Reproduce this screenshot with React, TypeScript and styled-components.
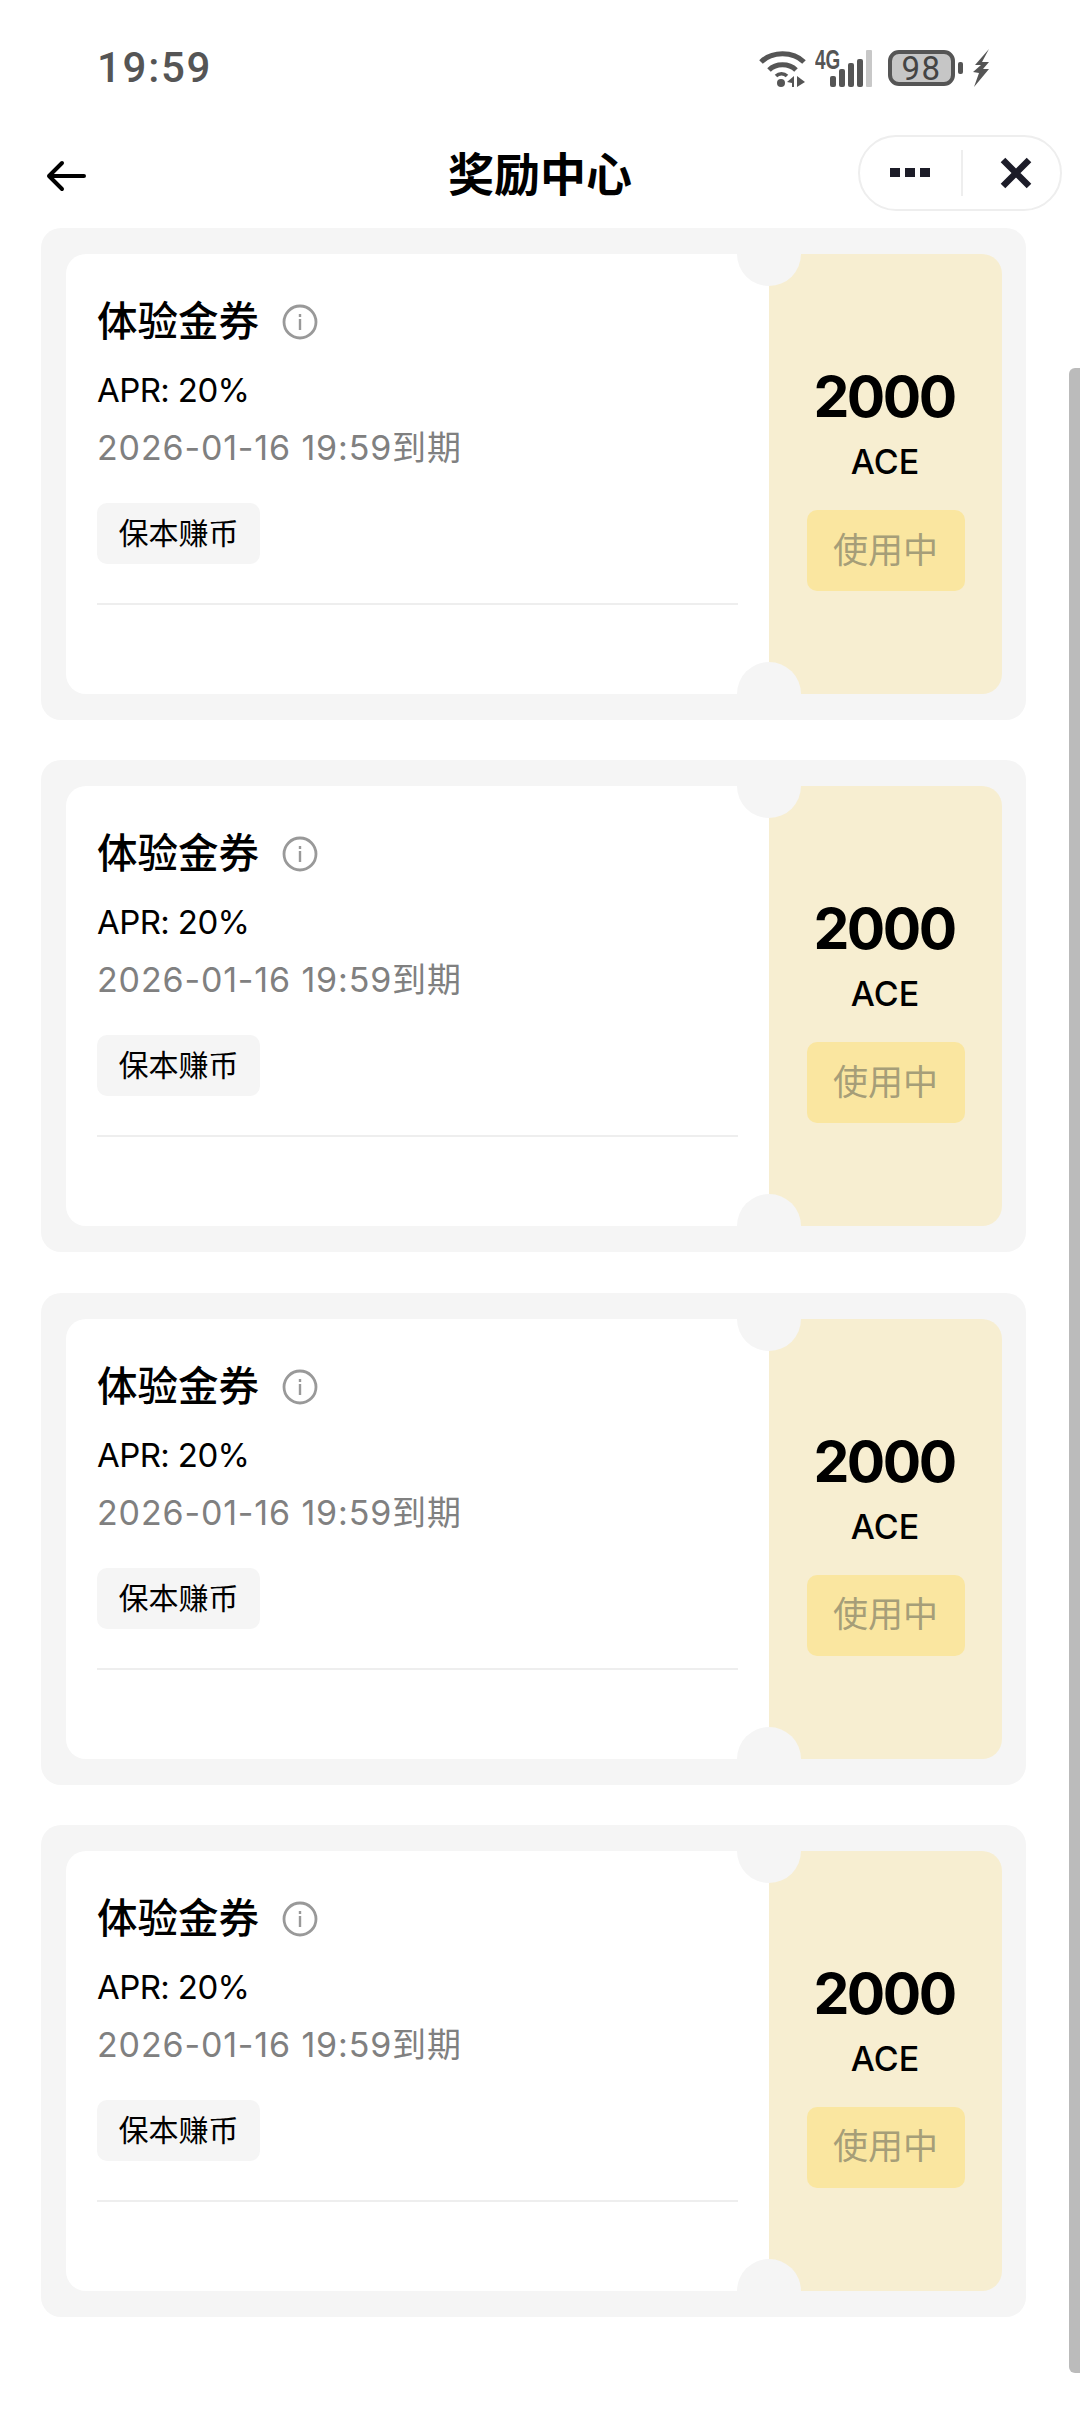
import React from "react";
import styled, { createGlobalStyle } from "styled-components";

const FONT = `Inter, "Noto Sans CJK SC", sans-serif`;

const GlobalStyle = createGlobalStyle`
  html, body {
    margin: 0;
    padding: 0;
    background: #fff;
  }
  * {
    box-sizing: border-box;
  }
`;

const Page = styled.div`
  position: relative;
  width: 1080px;
  height: 2412px;
  overflow: hidden;
  background: #fff;
  font-family: ${FONT};
  color: #000;
`;

const StatusBar = styled.div`
  height: 135px;
  padding: 44px 91px 0 97px;
  display: flex;
  justify-content: space-between;
  align-items: flex-start;
`;

const Clock = styled.span`
  font-family: Roboto, sans-serif;
  font-size: 42px;
  line-height: 48px;
  font-weight: 500;
  letter-spacing: 1.7px;
  color: #555;
`;

const StatusIcons = styled.div`
  display: flex;
  align-items: center;
  gap: 10px;
  height: 48px;
`;

const Signal = styled.div`
  position: relative;
  width: 56px;
  height: 37px;
`;

const SignalLabel = styled.span`
  position: absolute;
  left: -1px;
  top: -3px;
  font-family: "Liberation Sans", sans-serif;
  font-size: 27px;
  line-height: 27px;
  font-weight: 700;
  color: #555;
  transform: scaleX(0.7);
  transform-origin: left top;
`;

const Battery = styled.div`
  width: 67px;
  height: 36px;
  margin-left: 6px;
  border: 4px solid #555;
  border-radius: 11px;
  background: #c6c6c6;
  display: flex;
  align-items: center;
  justify-content: center;
  font-family: Roboto, sans-serif;
  font-size: 33px;
  letter-spacing: 1.5px;
  color: #444;
`;

const BatteryNub = styled.div`
  width: 5px;
  height: 12px;
  margin-left: -7px;
  border-radius: 2px;
  background: #555;
`;

const NavBar = styled.div`
  position: relative;
  height: 76px;
  display: flex;
  align-items: center;
  justify-content: space-between;
  padding: 0 18px 0 46px;
`;

const NavTitle = styled.h1`
  position: absolute;
  left: 0;
  right: 0;
  top: 7px;
  margin: 0;
  text-align: center;
  font-size: 46px;
  line-height: 64px;
  font-weight: 700;
  pointer-events: none;
`;

const BackSvg = styled.svg`
  margin-top: 6px;
`;

const Capsule = styled.div`
  width: 204px;
  height: 76px;
  border: 2px solid #eeeeee;
  border-radius: 38px;
  display: flex;
  align-items: center;
  padding-left: 30px;
`;

const CapsuleDivider = styled.div`
  width: 2px;
  height: 46px;
  margin-left: 31px;
  margin-right: 37px;
  background: #eeeeee;
`;

const List = styled.div`
  display: flex;
  flex-direction: column;
  gap: 40.33px;
  padding: 17px 0 0 41px;
`;

const Card = styled.div`
  width: 985px;
  height: 492px;
  padding: 26px 24px 26px 25px;
  display: flex;
  background: #f5f5f5;
  border-radius: 20px;
`;

const Ticket = styled.div`
  position: relative;
  flex: 1;
  display: flex;
  overflow: hidden;
  border-radius: 20px;
`;

const Notch = styled.span<{ $edge: "top" | "bottom" }>`
  position: absolute;
  left: 671px;
  ${(p) => p.$edge}: -32px;
  width: 64px;
  height: 64px;
  border-radius: 50%;
  background: #f5f5f5;
`;

const Details = styled.div`
  width: 703px;
  padding: 38px 31px 0 31px;
  display: flex;
  flex-direction: column;
  align-items: flex-start;
  background: #fff;
`;

const TitleRow = styled.div`
  display: flex;
  align-items: center;
  gap: 23px;
  height: 60px;
`;

const Title = styled.span`
  font-size: 40.5px;
  line-height: 60px;
  font-weight: 500;
`;

const Apr = styled.div`
  margin-top: 13px;
  font-size: 33px;
  line-height: 50px;
  letter-spacing: -0.6px;
`;

const Expiry = styled.div`
  margin-top: 8px;
  font-size: 34px;
  line-height: 50px;
  letter-spacing: 0.85px;
  color: #808080;
`;

const Tag = styled.div`
  margin-top: 30px;
  width: 163px;
  height: 61px;
  padding-bottom: 5px;
  display: flex;
  align-items: center;
  justify-content: center;
  border-radius: 10px;
  background: #f5f5f5;
  font-size: 30px;
`;

const Divider = styled.div`
  width: 100%;
  height: 2px;
  margin-top: 39px;
  background: #eeeeee;
`;

const Reward = styled.div`
  flex: 1;
  padding-top: 107px;
  display: flex;
  flex-direction: column;
  align-items: center;
  background: #f7eed1;
`;

const Amount = styled.div`
  margin-right: 3px;
  font-size: 57px;
  line-height: 72px;
  font-weight: 700;
  letter-spacing: -2.5px;
`;

const Unit = styled.div`
  margin-top: 7px;
  margin-right: 1px;
  font-size: 34px;
  line-height: 44px;
  font-weight: 500;
`;

const InUse = styled.div`
  margin-top: 26px;
  width: 158px;
  height: 81px;
  padding-bottom: 7px;
  display: flex;
  align-items: center;
  justify-content: center;
  border-radius: 10px;
  background: #fae6a0;
  color: #a69e78;
  font-size: 35px;
`;

const ScrollThumb = styled.div`
  position: absolute;
  left: 1069px;
  top: 368px;
  width: 11px;
  height: 2005px;
  border-radius: 6px 0 0 6px;
  background: #bbbbbb;
`;

const WifiIcon = () => (
  <svg width="47" height="37" viewBox="0 0 47 37" fill="none">
    <path d="M2 12C13 1 34 1 45 12" stroke="#555" strokeWidth="5" />
    <path d="M10 20C17 13 30 13 37 20" stroke="#555" strokeWidth="5" />
    <path d="M17 26C20 23 25 23 28 26" stroke="#555" strokeWidth="3.5" />
    <circle cx="22" cy="33" r="4" fill="#555" />
    <path d="M35 26V37H33V33L28 32ZM38 26L46 32L38 37Z" fill="#555" />
  </svg>
);

const SignalBars = () => (
  <svg width="56" height="37" viewBox="0 0 56 37">
    <rect x="14" y="26" width="6" height="11" rx="2" fill="#555" />
    <rect x="23" y="19" width="6" height="18" rx="2" fill="#555" />
    <rect x="32" y="13" width="6" height="24" rx="2" fill="#555" />
    <rect x="41" y="9" width="6" height="28" rx="2" fill="#555" />
    <rect x="50" y="0" width="6" height="37" rx="1" fill="#c8c8c8" />
  </svg>
);

const BoltIcon = () => (
  <svg width="16" height="38" viewBox="0 0 16 38">
    <path d="M16 0L2 16L8 16L0 23L6 24L1 38L16 20L10 20L16 13L9 13Z" fill="#555" />
  </svg>
);

const BackIcon = () => (
  <BackSvg width="40" height="32" viewBox="0 0 40 32" fill="none">
    <path
      d="M38 16H3M16 3L3 16L16 29"
      stroke="#000"
      strokeWidth="4"
      strokeLinecap="round"
      strokeLinejoin="round"
    />
  </BackSvg>
);

const MoreIcon = () => (
  <svg width="40" height="10" viewBox="0 0 40 10">
    <rect x="0" y="0" width="10" height="9" fill="#1c1c28" />
    <rect x="15" y="0" width="10" height="9" fill="#1c1c28" />
    <rect x="30" y="0" width="10" height="9" fill="#1c1c28" />
  </svg>
);

const CloseIcon = () => (
  <svg width="32" height="32" viewBox="0 0 32 32" fill="none">
    <path d="M3 3L29 29M29 3L3 29" stroke="#1c1c28" strokeWidth="6.5" />
  </svg>
);

const InfoIcon = () => (
  <svg width="36" height="36" viewBox="0 0 36 36" fill="none">
    <circle cx="18" cy="18" r="16" stroke="#999" strokeWidth="2.8" />
    <rect x="16.8" y="15" width="2.4" height="11" fill="#999" />
    <rect x="16.8" y="10" width="2.4" height="3" fill="#999" />
  </svg>
);

const Voucher = () => (
  <Card>
    <Ticket>
      <Details>
        <TitleRow>
          <Title>体验金券</Title>
          <InfoIcon />
        </TitleRow>
        <Apr>APR: 20%</Apr>
        <Expiry>2026-01-16 19:59到期</Expiry>
        <Tag>保本赚币</Tag>
        <Divider />
      </Details>
      <Reward>
        <Amount>2000</Amount>
        <Unit>ACE</Unit>
        <InUse>使用中</InUse>
      </Reward>
      <Notch $edge="top" />
      <Notch $edge="bottom" />
    </Ticket>
  </Card>
);

export default function App() {
  return (
    <Page>
      <GlobalStyle />
      <StatusBar>
        <Clock>19:59</Clock>
        <StatusIcons>
          <WifiIcon />
          <Signal>
            <SignalLabel>4G</SignalLabel>
            <SignalBars />
          </Signal>
          <Battery>98</Battery>
          <BatteryNub />
          <BoltIcon />
        </StatusIcons>
      </StatusBar>
      <NavBar>
        <BackIcon />
        <NavTitle>奖励中心</NavTitle>
        <Capsule>
          <MoreIcon />
          <CapsuleDivider />
          <CloseIcon />
        </Capsule>
      </NavBar>
      <List>
        {[0, 1, 2, 3].map((i) => (
          <Voucher key={i} />
        ))}
      </List>
      <ScrollThumb />
    </Page>
  );
}
